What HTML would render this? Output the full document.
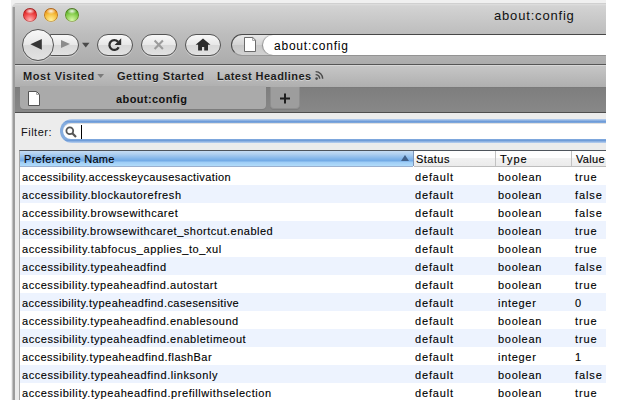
<!DOCTYPE html>
<html><head><meta charset="utf-8">
<style>
*{margin:0;padding:0;box-sizing:border-box}
html,body{width:620px;height:400px;overflow:hidden;background:#fff;font-family:"Liberation Sans",sans-serif}
.a{position:absolute}
#shadow{position:absolute;left:11px;top:0;width:609px;height:400px;background:#f0f0f0}
#win{position:absolute;left:12px;top:3px;width:594px;height:397px;overflow:hidden;background:#ececec;border-top-left-radius:5px}
.ln{position:absolute;left:0;width:594px;height:1px}
.btn{position:absolute;border:1px solid #545454;border-radius:11px;background:linear-gradient(#f8f8f8,#e8e8e8 48%,#d8d8d8 52%,#e2e2e2);box-shadow:0 1px 0 rgba(255,255,255,.35)}
.bmt{position:absolute;top:69px;font-size:11px;font-weight:bold;color:#1c1c1c;text-shadow:0 1px 0 rgba(255,255,255,.4);white-space:nowrap;line-height:14px}
.row{position:absolute;left:0;width:586px;height:18px;font-size:11px;color:#000;-webkit-text-stroke:.12px #000;line-height:18px;white-space:nowrap}
.row span{position:absolute;top:1px}
.row.alt{background:#edf3fe}
.c1{left:2px}
.c2{left:395px;letter-spacing:.85px}
.c3{left:478px;letter-spacing:.7px}
.c4{left:555px;letter-spacing:.9px}
.hd{position:absolute;top:152px;font-size:11px;color:#000;-webkit-text-stroke:.12px #000;line-height:14px;white-space:nowrap}
</style></head><body>
<div id="shadow"></div>
<div id="win">
  <div class="a" style="left:0;top:0;width:594px;height:31px;background:linear-gradient(#d0d0d0 0,#d0d0d0 1px,#dfdfdf 1px,#d3d3d3 3px,#bdbdbd 31px)"></div>
  <div class="a" style="left:0;top:31px;width:594px;height:30px;background:linear-gradient(#bdbdbd,#acacac)"></div>
  <div class="ln" style="top:61px;background:#565656"></div>
  <div class="ln" style="top:62px;background:#d8d8d8"></div>
  <div class="a" style="left:0;top:63px;width:594px;height:21px;background:linear-gradient(#c6c6c6,#afafaf)"></div>
  <div class="ln" style="top:84px;background:#7a7a7a"></div>
  <div class="a" style="left:0;top:85px;width:594px;height:24px;background:linear-gradient(#7e7e7e,#888)"></div>
  <div class="ln" style="top:109px;background:#4e4e4e"></div>
  <div class="a" style="left:0;top:4px;width:3px;height:393px;background:linear-gradient(90deg,#c2c2c2 0,#c2c2c2 50%,#9c9c9c 50%)"></div>
</div>

<!-- traffic lights -->
<div class="a" style="left:23px;top:8px;width:14px;height:14px;border-radius:7px;box-shadow:inset 0 0 0 .8px rgba(60,0,0,.35),0 0 1px rgba(255,255,255,.6);background:radial-gradient(ellipse 5px 3px at 50% 22%,rgba(255,255,255,.9),rgba(255,255,255,0)),radial-gradient(circle at 50% 85%,#ffb4b4 0,#f04a4a 45%,#d21c1c 75%,#8e0d0d 100%)"></div>
<div class="a" style="left:44px;top:8px;width:14px;height:14px;border-radius:7px;box-shadow:inset 0 0 0 .8px rgba(60,0,0,.35),0 0 1px rgba(255,255,255,.6);background:radial-gradient(ellipse 5px 3px at 50% 22%,rgba(255,255,255,.9),rgba(255,255,255,0)),radial-gradient(circle at 50% 85%,#fff09a 0,#f6c040 45%,#e48a10 75%,#9a5806 100%)"></div>
<div class="a" style="left:65px;top:8px;width:14px;height:14px;border-radius:7px;box-shadow:inset 0 0 0 .8px rgba(60,0,0,.35),0 0 1px rgba(255,255,255,.6);background:radial-gradient(ellipse 5px 3px at 50% 22%,rgba(255,255,255,.9),rgba(255,255,255,0)),radial-gradient(circle at 50% 85%,#d8f8a8 0,#8ad050 45%,#4ea420 75%,#2a6a0c 100%)"></div>

<!-- title -->
<div class="a" style="left:494px;top:8px;font-size:13px;letter-spacing:.82px;color:#111;line-height:16px;white-space:nowrap">about:config</div>

<!-- nav buttons -->
<div class="btn" style="left:50px;top:34px;width:29px;height:22px;border-radius:0 11px 11px 0"></div>
<div class="btn" style="left:22px;top:29px;width:32px;height:32px;border-radius:16px"></div>
<div class="btn" style="left:97px;top:34px;width:36px;height:22px"></div>
<div class="btn" style="left:141px;top:34px;width:36px;height:22px"></div>
<div class="btn" style="left:185px;top:34px;width:36px;height:22px"></div>
<svg class="a" style="left:0;top:0" width="620" height="120">
  <path d="M30.4 44.2 L41.8 38.9 L41.8 49.8 Z" fill="#363636"/>
  <path d="M70 44 L61 40 L61 48 Z" fill="#8c8c8c"/>
  <path d="M82 42.8 L89.5 42.8 L85.75 47.5 Z" fill="#4a4a4a"/>
  <path d="M118 41.8 A4.9 4.9 0 1 0 118.7 47.2" fill="none" stroke="#2e2e2e" stroke-width="2.3"/>
  <path d="M114.6 44.9 L121.2 44.9 L121.2 38.2 Z" fill="#2e2e2e"/>
  <path d="M154.6 40.6 L162.9 48.9 M162.9 40.6 L154.6 48.9" stroke="#9c9c9c" stroke-width="2.1"/>
  <path d="M203 38.5 L195.6 44.8 L198.1 44.8 L198.1 50.6 L202 50.6 L202 47 L204.2 47 L204.2 50.6 L208 50.6 L208 44.8 L210.5 44.8 Z" fill="#2c2c2c"/>
</svg>

<!-- url bar -->
<div class="a" style="left:231px;top:34px;width:389px;height:22px;border:1px solid #4a4a4a;border-bottom-color:#989898;border-right:none;border-radius:11px 0 0 11px;background:linear-gradient(#e8e8e8,#d4d4d4 50%,#c8c8c8 51%,#d2d2d2)"></div>
<div class="a" style="left:263px;top:35px;width:343px;height:20px;border-radius:10px 0 0 10px;background:#fff;box-shadow:-1px 0 1px rgba(0,0,0,.3)"></div>
<svg class="a" style="left:0;top:0" width="620" height="120">
  <path d="M244.5 37.5 L252.8 37.5 L255.5 40.2 L255.5 51.5 L244.5 51.5 Z" fill="#fff" stroke="#5c5c5c" stroke-width=".9"/><path d="M252.6 37.6 L252.6 40.4 L255.4 40.4" fill="none" stroke="#777" stroke-width=".7"/>
</svg>
<div class="a" style="left:274px;top:38px;font-size:12px;letter-spacing:.78px;color:#000;line-height:16px;white-space:nowrap">about:config</div>

<!-- bookmarks -->
<div class="bmt" style="left:23px;letter-spacing:.6px">Most Visited</div>
<div class="bmt" style="left:117px;letter-spacing:.53px">Getting Started</div>
<div class="bmt" style="left:217px;letter-spacing:.45px">Latest Headlines</div>
<svg class="a" style="left:0;top:0" width="620" height="120">
  <path d="M97.3 74 L104 74 L100.65 78 Z" fill="#7a7a7a"/>
  <circle cx="316.6" cy="78.6" r="1.3" fill="#4a4a4a"/>
  <path d="M315.6 74.6 A4.1 4.1 0 0 1 319.7 78.8 M315.6 71.6 A7.1 7.1 0 0 1 322.7 78.8" fill="none" stroke="#4a4a4a" stroke-width="1.4"/>
</svg>

<!-- tabs -->
<div class="a" style="left:20px;top:86px;width:246px;height:22.5px;background:#aaaaaa;border-radius:0 0 4px 4px;box-shadow:0 1px 0 #7c7c7c"></div>
<div class="a" style="left:270px;top:87px;width:30px;height:22px;background:#9d9d9d;border:1px solid #8e8e8e;border-top:none;border-radius:0 0 4px 4px;box-shadow:0 1px 0 #7c7c7c"></div>
<svg class="a" style="left:0;top:0" width="620" height="120">
  <path d="M28.5 91.5 L36.5 91.5 L39.5 94.5 L39.5 105.5 L28.5 105.5 Z" fill="#fff" stroke="#555" stroke-width="1"/><path d="M36.6 91.6 L36.6 94.4 L39.4 94.4" fill="none" stroke="#777" stroke-width=".7"/>
  <path d="M280 98.5 L290 98.5 M285 93.5 L285 103.5" stroke="#1e1e1e" stroke-width="2"/>
</svg>
<div class="a" style="left:116px;top:92px;font-size:11px;font-weight:bold;letter-spacing:.4px;color:#111;line-height:14px;white-space:nowrap">about:config</div>

<!-- filter -->
<div class="a" style="left:21px;top:125px;font-size:11px;letter-spacing:.5px;color:#111;line-height:14px">Filter:</div>
<div class="a" style="left:60px;top:119px;width:560px;height:24px;border-radius:12px 0 0 12px;background:linear-gradient(#bcd2f0 0,#6f9cd8 2.5px,#84acdf 4px,#84acdf 20px,#6f9cd8 21.5px,#bcd2f0 24px)"></div>
<div class="a" style="left:63px;top:123px;width:557px;height:16px;border-radius:8px 0 0 8px;background:#fff;box-shadow:inset 0 1px 0 rgba(0,0,0,.12)"></div>
<svg class="a" style="left:0;top:0" width="620" height="150">
  <circle cx="69.8" cy="130.8" r="3.4" fill="none" stroke="#555" stroke-width="1.8"/>
  <path d="M72.3 133.3 L76 137" stroke="#555" stroke-width="2.2"/>
  <path d="M81.5 125 L81.5 139" stroke="#000" stroke-width="1"/>
</svg>

<!-- tree -->
<div class="a" style="left:19px;top:150px;width:587px;height:250px;background:#fff;border-left:1px solid #a8a8a8;border-top:1px solid #4e545c"></div>
<div class="a" style="left:20px;top:151px;width:393px;height:15px;background:linear-gradient(#c6dcf3 0,#b0d0f0 20%,#84b6ea 50%,#72aae6 65%,#9ecdf6 75%,#b2dcfa 100%)"></div>
<div class="a" style="left:414px;top:151px;width:192px;height:15px;background:linear-gradient(#fefefe 0,#fefefe 45%,#f1f1f1 50%,#ebebeb 100%)"></div>
<div class="a" style="left:20px;top:166px;width:393px;height:1px;background:#9ab0d0"></div>
<div class="a" style="left:414px;top:166px;width:192px;height:1px;background:#bdbdbd"></div>
<div class="a" style="left:413px;top:151px;width:1px;height:15px;background:#7d95b8"></div>
<div class="a" style="left:495px;top:151px;width:1px;height:15px;background:#c2c2c2"></div>
<div class="a" style="left:571px;top:151px;width:1px;height:15px;background:#c2c2c2"></div>
<svg class="a" style="left:0;top:0" width="620" height="170">
  <path d="M401 161 L405 155 L409 161 Z" fill="#42618a"/>
</svg>
<div class="hd" style="left:24px;letter-spacing:.3px">Preference Name</div>
<div class="hd" style="left:416px;letter-spacing:.45px">Status</div>
<div class="hd" style="left:500px;letter-spacing:.9px">Type</div>
<div class="hd" style="left:576px;letter-spacing:.3px">Value</div>

<div class="a" style="left:20px;top:167px;width:586px;height:233px;overflow:hidden">
<div class="row" style="top:0px"><span class="c1" style="letter-spacing:0.397px">accessibility.accesskeycausesactivation</span><span class="c2">default</span><span class="c3">boolean</span><span class="c4">true</span></div>
<div class="row alt" style="top:18px"><span class="c1" style="letter-spacing:0.578px">accessibility.blockautorefresh</span><span class="c2">default</span><span class="c3">boolean</span><span class="c4">false</span></div>
<div class="row" style="top:36px"><span class="c1" style="letter-spacing:0.550px">accessibility.browsewithcaret</span><span class="c2">default</span><span class="c3">boolean</span><span class="c4">false</span></div>
<div class="row alt" style="top:54px"><span class="c1" style="letter-spacing:0.508px">accessibility.browsewithcaret_shortcut.enabled</span><span class="c2">default</span><span class="c3">boolean</span><span class="c4">true</span></div>
<div class="row" style="top:72px"><span class="c1" style="letter-spacing:0.561px">accessibility.tabfocus_applies_to_xul</span><span class="c2">default</span><span class="c3">boolean</span><span class="c4">true</span></div>
<div class="row alt" style="top:90px"><span class="c1" style="letter-spacing:0.542px">accessibility.typeaheadfind</span><span class="c2">default</span><span class="c3">boolean</span><span class="c4">false</span></div>
<div class="row" style="top:108px"><span class="c1" style="letter-spacing:0.533px">accessibility.typeaheadfind.autostart</span><span class="c2">default</span><span class="c3">boolean</span><span class="c4">true</span></div>
<div class="row alt" style="top:126px"><span class="c1" style="letter-spacing:0.440px">accessibility.typeaheadfind.casesensitive</span><span class="c2">default</span><span class="c3">integer</span><span class="c4">0</span></div>
<div class="row" style="top:144px"><span class="c1" style="letter-spacing:0.529px">accessibility.typeaheadfind.enablesound</span><span class="c2">default</span><span class="c3">boolean</span><span class="c4">true</span></div>
<div class="row alt" style="top:162px"><span class="c1" style="letter-spacing:0.535px">accessibility.typeaheadfind.enabletimeout</span><span class="c2">default</span><span class="c3">boolean</span><span class="c4">true</span></div>
<div class="row" style="top:180px"><span class="c1" style="letter-spacing:0.461px">accessibility.typeaheadfind.flashBar</span><span class="c2">default</span><span class="c3">integer</span><span class="c4">1</span></div>
<div class="row alt" style="top:198px"><span class="c1" style="letter-spacing:0.561px">accessibility.typeaheadfind.linksonly</span><span class="c2">default</span><span class="c3">boolean</span><span class="c4">false</span></div>
<div class="row" style="top:216px"><span class="c1" style="letter-spacing:0.569px">accessibility.typeaheadfind.prefillwithselection</span><span class="c2">default</span><span class="c3">boolean</span><span class="c4">true</span></div>
</div>
<div class="a" style="left:606px;top:0;width:14px;height:400px;background:#fff"></div>
</body></html>
